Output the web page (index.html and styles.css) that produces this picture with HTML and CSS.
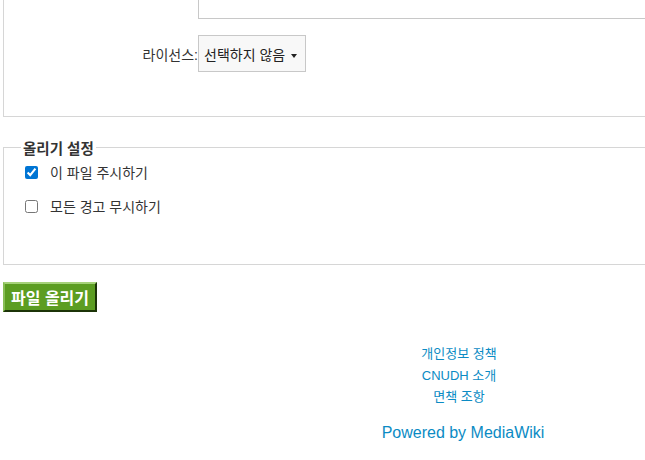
FILE: index.html
```html
<!DOCTYPE html>
<html lang="ko">

<head>
  <meta charset="UTF-8">
  <meta name="viewport" content="width=device-width, initial-scale=1.0">
  <title>파일 올리기</title>
  <link rel="stylesheet" href="styles.css">
</head>

<body>
  <div class="page">
    <fieldset class="box box-info">
      <div class="row">
        <div class="row-label"></div>
        <div class="row-field"><textarea class="desc" rows="4"></textarea></div>
      </div>
      <div class="row row-license">
        <label class="row-label" for="license">라이선스:</label>
        <div class="row-field">
          <button type="button" id="license" class="dropdown">선택하지 않음 <span class="caret"></span></button>
        </div>
      </div>
    </fieldset>

    <fieldset class="box box-options">
      <legend>올리기 설정</legend>
      <div class="check">
        <input type="checkbox" id="watch" checked><label for="watch">이 파일 주시하기</label>
      </div>
      <div class="check">
        <input type="checkbox" id="ignore"><label for="ignore">모든 경고 무시하기</label>
      </div>
    </fieldset>

    <button type="submit" class="upload">파일 올리기</button>

    <footer class="footer">
      <ul class="footer-links">
        <li><a href="#">개인정보 정책</a></li>
        <li><a href="#">CNUDH 소개</a></li>
        <li><a href="#">면책 조항</a></li>
      </ul>
      <a class="powered" href="#">Powered by MediaWiki</a>
    </footer>
  </div>
</body>

</html>
```

FILE: styles.css
```css
html {
  overflow: hidden;
}

body {
  margin: 0;
  background: #ffffff;
  color: #222;
  font-family: "Liberation Sans", "Noto Sans CJK KR", Arial, sans-serif;
  font-size: 14px;
}

.page {
  width: 920px;
  padding-left: 3px;
  margin-top: -60px;
}

.box {
  border: 1px solid #d6d6d6;
  margin: 0;
  padding: 0 20px;
}

.box-info {
  padding-bottom: 44px;
}

.row {
  display: flex;
}

.row-label {
  width: 174px;
  text-align: right;
  flex: none;
  color: #333;
}

.row-field {
  flex: 1;
}

.desc {
  display: block;
  width: 100%;
  height: 78px;
  box-sizing: border-box;
  border: 1px solid #c8c8c8;
  resize: none;
}

.row-license {
  align-items: center;
  margin-top: 16px;
}

.dropdown {
  display: block;
  box-sizing: border-box;
  height: 37px;
  padding: 0 8px 0 5px;
  border: 1px solid #c8c8c8;
  background: #f8f8f8;
  color: #222;
  font-family: inherit;
  font-size: 14px;
  white-space: nowrap;
}

.caret {
  display: inline-block;
  width: 0;
  height: 0;
  margin-left: 2px;
  vertical-align: middle;
  border-left: 3px solid transparent;
  border-right: 3px solid transparent;
  border-top: 4px solid #222;
}

.box-options {
  margin-top: 20px;
  height: 128px;
  box-sizing: border-box;
  padding: 0 20px 0 21px;
}

.box-options legend {
  font-weight: bold;
  font-size: 14.5px;
  padding: 0 2px;
  margin-left: -4px;
  color: #333;
}

.check {
  display: flex;
  align-items: center;
  height: 34px;
  color: #333;
}

.check:first-of-type {
  margin-top: -3px;
}

.check input {
  width: 13px;
  height: 13px;
  margin: 0 12px 0 0;
  accent-color: #0075d4;
}

.upload {
  display: block;
  margin: 17px 0 0 0;
  height: 30px;
  padding: 0 6px;
  background: #5c9d22;
  color: #ffffff;
  font-family: inherit;
  font-size: 16px;
  font-weight: bold;
  border: 2px solid;
  border-color: #a6d27a #1c3408 #1c3408 #88be55;
}

.footer {
  margin-top: 31px;
  text-align: center;
}

.footer-links {
  list-style: none;
  margin: 0;
  padding: 0 8px 0 0;
  font-size: 13px;
  line-height: 21.5px;
}

.footer a {
  color: #0b8bc4;
  text-decoration: none;
}

.powered {
  display: inline-block;
  margin-top: 16px;
  font-size: 16px;
}
```
